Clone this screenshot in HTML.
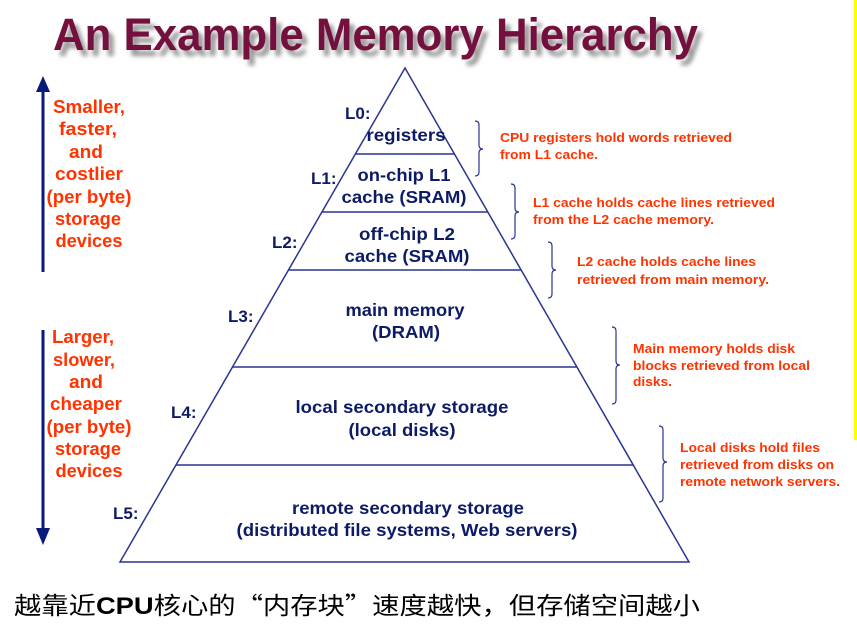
<!DOCTYPE html>
<html><head><meta charset="utf-8"><style>
body{margin:0;width:857px;height:630px;background:#fff;overflow:hidden;position:relative;font-family:"Liberation Sans",Arial,sans-serif}
svg{position:absolute;left:0;top:0}
</style></head><body>
<svg width="857" height="630" xmlns="http://www.w3.org/2000/svg" font-family="Liberation Sans, Arial, sans-serif" font-weight="bold">
<defs><filter id="sh" x="-5%" y="-20%" width="110%" height="160%"><feGaussianBlur stdDeviation="2"/></filter></defs>
<rect x="854" y="0" width="3" height="440" fill="#ffff00"/>
<text x="55" y="52" font-size="45" fill="#999" filter="url(#sh)" transform="translate(3,4)" textLength="645" lengthAdjust="spacingAndGlyphs">An Example Memory Hierarchy</text>
<text x="53" y="50" font-size="45" fill="#74103e" textLength="645" lengthAdjust="spacingAndGlyphs">An Example Memory Hierarchy</text>
<line x1="43" y1="90" x2="43" y2="272" stroke="#0a1a7a" stroke-width="3"/>
<polygon points="36,92 50,92 43,76" fill="#0a1a7a"/>
<line x1="43" y1="330" x2="43" y2="530" stroke="#0a1a7a" stroke-width="3"/>
<polygon points="36,528 50,528 43,545" fill="#0a1a7a"/>
<g fill="#ff3300" font-size="18" text-anchor="middle">
<text x="89" y="113" textLength="72" lengthAdjust="spacingAndGlyphs">Smaller,</text><text x="88" y="135" textLength="58" lengthAdjust="spacingAndGlyphs">faster,</text><text x="86" y="158" textLength="34" lengthAdjust="spacingAndGlyphs">and</text><text x="89" y="180" textLength="68" lengthAdjust="spacingAndGlyphs">costlier</text><text x="89" y="203" textLength="85" lengthAdjust="spacingAndGlyphs">(per byte)</text><text x="88" y="225" textLength="66" lengthAdjust="spacingAndGlyphs">storage</text><text x="89" y="247" textLength="67" lengthAdjust="spacingAndGlyphs">devices</text>
<text x="83" y="343" textLength="62" lengthAdjust="spacingAndGlyphs">Larger,</text><text x="84" y="366" textLength="62" lengthAdjust="spacingAndGlyphs">slower,</text><text x="86" y="388" textLength="34" lengthAdjust="spacingAndGlyphs">and</text><text x="86" y="410" textLength="72" lengthAdjust="spacingAndGlyphs">cheaper</text><text x="89" y="433" textLength="85" lengthAdjust="spacingAndGlyphs">(per byte)</text><text x="88" y="455" textLength="66" lengthAdjust="spacingAndGlyphs">storage</text><text x="89" y="477" textLength="67" lengthAdjust="spacingAndGlyphs">devices</text>
</g>
<g stroke="#2a3590" stroke-width="1.5" fill="none">
<polygon points="405,68 120,562 689,562"/>
<line x1="355" y1="154" x2="455" y2="154"/>
<line x1="322" y1="212" x2="488" y2="212"/>
<line x1="288" y1="270" x2="521" y2="270"/>
<line x1="232" y1="367" x2="577" y2="367"/>
<line x1="176" y1="465" x2="633" y2="465"/>
</g>
<g fill="#0d1b66" font-size="17">
<text x="345" y="119">L0:</text>
<text x="311" y="184">L1:</text>
<text x="272" y="248">L2:</text>
<text x="228" y="322">L3:</text>
<text x="171" y="418">L4:</text>
<text x="113" y="519">L5:</text>
<g text-anchor="middle" font-size="17.5">
<text x="406" y="141" textLength="79" lengthAdjust="spacingAndGlyphs">registers</text>
<text x="404" y="181" textLength="93" lengthAdjust="spacingAndGlyphs">on-chip L1</text><text x="404" y="203" textLength="125" lengthAdjust="spacingAndGlyphs">cache (SRAM)</text>
<text x="407" y="240" textLength="96" lengthAdjust="spacingAndGlyphs">off-chip L2</text><text x="407" y="262" textLength="125" lengthAdjust="spacingAndGlyphs">cache (SRAM)</text>
<text x="405" y="316" textLength="119" lengthAdjust="spacingAndGlyphs">main memory</text><text x="406" y="338" textLength="68" lengthAdjust="spacingAndGlyphs">(DRAM)</text>
<text x="402" y="413" textLength="213" lengthAdjust="spacingAndGlyphs">local secondary storage</text><text x="402" y="436" textLength="107" lengthAdjust="spacingAndGlyphs">(local disks)</text>
<text x="408" y="514" textLength="232" lengthAdjust="spacingAndGlyphs">remote secondary storage</text><text x="407" y="536" textLength="341" lengthAdjust="spacingAndGlyphs">(distributed file systems, Web servers)</text>
</g></g>
<g stroke="#2a3590" stroke-width="1.2" fill="none">
<path d="M475,121 q4,0 4,4 v20 q0,4 4,4 q-4,0 -4,4 v19 q0,4 -4,4"/>
<path d="M511,184 q4,0 4,4 v20 q0,4 4,4 q-4,0 -4,4 v19 q0,4 -4,4"/>
<path d="M548,242 q4,0 4,4 v20 q0,4 4,4 q-4,0 -4,4 v20 q0,4 -4,4"/>
<path d="M612,327 q4,0 4,4 v30 q0,4 4,4 q-4,0 -4,4 v31 q0,4 -4,4"/>
<path d="M659,426 q4,0 4,4 v28 q0,4 4,4 q-4,0 -4,4 v32 q0,4 -4,4"/>
</g>
<g fill="#ff3300" font-size="13">
<text x="500" y="142" textLength="232" lengthAdjust="spacingAndGlyphs">CPU registers hold words retrieved</text><text x="500" y="159" textLength="98" lengthAdjust="spacingAndGlyphs">from L1 cache.</text>
<text x="533" y="207" textLength="242" lengthAdjust="spacingAndGlyphs">L1 cache holds cache lines retrieved</text><text x="533" y="224" textLength="181" lengthAdjust="spacingAndGlyphs">from the L2 cache memory.</text>
<text x="577" y="266" textLength="179" lengthAdjust="spacingAndGlyphs">L2 cache holds cache lines</text><text x="577" y="284" textLength="192" lengthAdjust="spacingAndGlyphs">retrieved from main memory.</text>
<text x="633" y="353" textLength="162" lengthAdjust="spacingAndGlyphs">Main memory holds disk</text><text x="633" y="370" textLength="177" lengthAdjust="spacingAndGlyphs">blocks retrieved from local</text><text x="633" y="386" textLength="39" lengthAdjust="spacingAndGlyphs">disks.</text>
<text x="680" y="452" textLength="140" lengthAdjust="spacingAndGlyphs">Local disks hold files</text><text x="680" y="469" textLength="154" lengthAdjust="spacingAndGlyphs">retrieved from disks on</text><text x="680" y="486" textLength="160" lengthAdjust="spacingAndGlyphs">remote network servers.</text>
</g>
<text x="14" y="614" font-size="24" font-weight="normal" fill="#000" font-family="Liberation Sans, Noto Sans CJK SC, sans-serif" textLength="686" lengthAdjust="spacingAndGlyphs">越靠近<tspan font-weight="bold">CPU</tspan>核心的<tspan font-family="Noto Sans CJK SC">“</tspan>内存块<tspan font-family="Noto Sans CJK SC">”</tspan>速度越快，但存储空间越小</text>
</svg>
</body></html>
